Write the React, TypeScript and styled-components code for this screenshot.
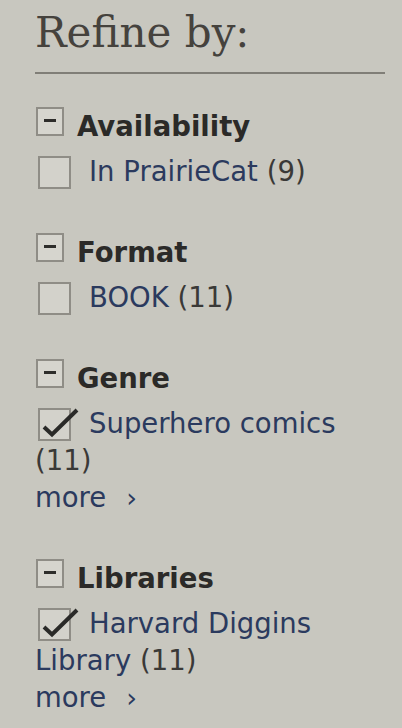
import React from "react";
import styled, { createGlobalStyle } from "styled-components";

const Global = createGlobalStyle`
  html, body {
    margin: 0;
    padding: 0;
    background: #c8c7bf;
  }
  body {
    font-family: "DejaVu Sans", Verdana, sans-serif;
  }
`;

const Panel = styled.aside`
  box-sizing: border-box;
  width: 402px;
  min-height: 728px;
  padding: 10px 17px 0 35px;
  background: #c8c7bf;
`;

const Title = styled.h2`
  margin: 0;
  padding-bottom: 16px;
  border-bottom: 2px solid #807e77;
  font-family: "DejaVu Serif", "Liberation Serif", serif;
  font-weight: normal;
  font-size: 42px;
  line-height: 46px;
  color: #45423d;
`;

const Sections = styled.div`
  padding-top: 33px;
  display: flex;
  flex-direction: column;
  gap: 43px;
`;

const Section = styled.section`
  display: flex;
  flex-direction: column;
  gap: 11px;
`;

const Header = styled.div`
  font-size: 27.5px;
  font-weight: bold;
  line-height: 32px;
  color: #2b2a28;
  white-space: nowrap;
`;

const Toggle = styled.span`
  display: inline-block;
  box-sizing: border-box;
  width: 28px;
  height: 29px;
  margin: 0 13px 0 1px;
  border: 2px solid #8f8d86;
  background: #d6d5ce;
  vertical-align: baseline;
  position: relative;
  &::after {
    content: "";
    position: absolute;
    left: 6px;
    top: 10px;
    width: 12px;
    height: 3px;
    background: #2e2d2b;
  }
`;

const Items = styled.div`
  font-size: 27.5px;
  line-height: 37px;
`;

const Item = styled.div`
  color: #2b3a5e;
`;

const Box = styled.span`
  display: inline-block;
  box-sizing: border-box;
  width: 33px;
  height: 33px;
  margin: 0 18px 0 3px;
  border: 2px solid #8f8d86;
  background: #d3d2cb;
  vertical-align: middle;
  position: relative;
  top: -1px;
`;

const Check = styled.svg`
  position: absolute;
  left: -2px;
  top: -2px;
  overflow: visible;
`;

const Count = styled.span`
  color: #3a3937;
`;

const More = styled.div`
  color: #2b3a5e;
`;

const Chevron = styled.span`
  margin-left: 20px;
  font-size: 27px;
`;

type Entry = { label: string; count: number; checked?: boolean };
type Facet = { title: string; items: Entry[]; more?: boolean };

const facets: Facet[] = [
  { title: "Availability", items: [{ label: "In PrairieCat", count: 9 }] },
  { title: "Format", items: [{ label: "BOOK", count: 11 }] },
  {
    title: "Genre",
    items: [{ label: "Superhero comics", count: 11, checked: true }],
    more: true,
  },
  {
    title: "Libraries",
    items: [{ label: "Harvard Diggins Library", count: 11, checked: true }],
    more: true,
  },
];

export default function App() {
  return (
    <>
      <Global />
      <Panel>
        <Title>Refine by:</Title>
        <Sections>
          {facets.map((f) => (
            <Section key={f.title}>
              <Header>
                <Toggle />
                {f.title}
              </Header>
              <Items>
                {f.items.map((it) => (
                  <Item key={it.label}>
                    <Box>
                      {it.checked && (
                        <Check width="33" height="33" viewBox="0 0 33 33">
                          <path
                            d="M6 19 L14 26.5 L39 2"
                            fill="none"
                            stroke="#2a2a28"
                            strokeWidth="4"
                            strokeLinejoin="miter"
                          />
                        </Check>
                      )}
                    </Box>
                    {it.label} <Count>({it.count})</Count>
                  </Item>
                ))}
                {f.more && (
                  <More>
                    more<Chevron>›</Chevron>
                  </More>
                )}
              </Items>
            </Section>
          ))}
        </Sections>
      </Panel>
    </>
  );
}
